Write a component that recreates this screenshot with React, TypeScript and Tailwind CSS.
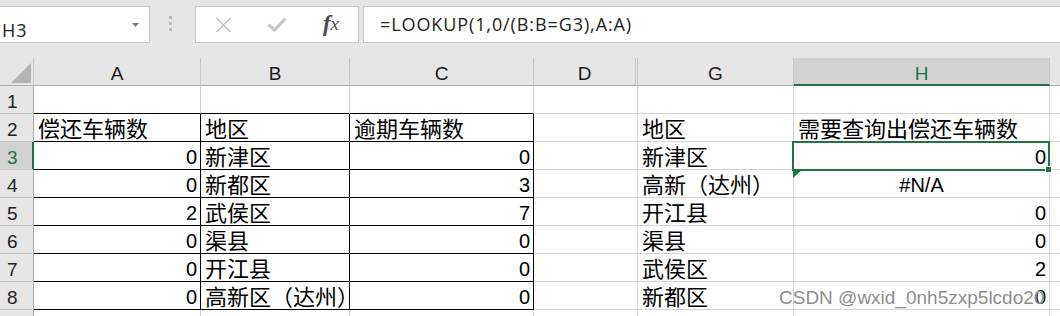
import React from "react";

type Value = string | number | null;

interface RowData {
  n: number;
  a: Value;
  b: Value;
  c: Value;
  d: Value;
  g: Value;
  h: Value;
}

const rows: RowData[] = [
  { n: 1, a: null, b: null, c: null, d: null, g: null, h: null },
  { n: 2, a: "偿还车辆数", b: "地区", c: "逾期车辆数", d: null, g: "地区", h: "需要查询出偿还车辆数" },
  { n: 3, a: 0, b: "新津区", c: 0, d: null, g: "新津区", h: 0 },
  { n: 4, a: 0, b: "新都区", c: 3, d: null, g: "高新（达州）", h: "#N/A" },
  { n: 5, a: 2, b: "武侯区", c: 7, d: null, g: "开江县", h: 0 },
  { n: 6, a: 0, b: "渠县", c: 0, d: null, g: "渠县", h: 0 },
  { n: 7, a: 0, b: "开江县", c: 0, d: null, g: "武侯区", h: 2 },
  { n: 8, a: 0, b: "高新区（达州）", c: 0, d: null, g: "新都区", h: 0 },
  { n: 9, a: null, b: null, c: null, d: null, g: null, h: null },
];

function CellValue({ value }: { value: Value }) {
  if (value === null) return null;
  if (typeof value === "number") {
    return (
      <div className="flex justify-end pr-[3px] pt-[4px] font-['Liberation_Sans',sans-serif] text-[20px] leading-[23px] text-black">
        {value}
      </div>
    );
  }
  if (value.startsWith("#")) {
    return (
      <div className="flex justify-center pt-[4px] font-['Liberation_Sans',sans-serif] text-[20px] leading-[23px] text-black">
        {value}
      </div>
    );
  }
  return (
    <div className="whitespace-nowrap pl-[4px] font-['Noto_Sans_CJK_SC',sans-serif] text-[22px] leading-[26px] text-black">
      {value}
    </div>
  );
}

function Cell({
  width,
  value,
  borders,
  children,
}: {
  width: string;
  value: Value;
  borders: string;
  children?: React.ReactNode;
}) {
  return (
    <div className={`relative h-[28px] shrink-0 border-r border-b ${width} ${borders}`}>
      <div className="h-full overflow-hidden">
        <CellValue value={value} />
      </div>
      {children}
    </div>
  );
}

function RowHeader({ n }: { n: number }) {
  if (n === 3) {
    return (
      <div className="h-[28px] w-[34px] shrink-0 border-r-2 border-b border-r-[#217346] border-b-[#c6c6c6] bg-[#d2d2d2] pl-[7px] pt-[5px] font-['Liberation_Sans',sans-serif] text-[19px] leading-[22px] text-[#217346]">
        {n}
      </div>
    );
  }
  return (
    <div className="h-[28px] w-[34px] shrink-0 border-r border-b border-r-[#ababab] border-b-[#c6c6c6] bg-[#e6e6e6] pl-[7px] pt-[5px] font-['Liberation_Sans',sans-serif] text-[19px] leading-[22px] text-[#222]">
      {n}
    </div>
  );
}

function SheetRow({ row }: { row: RowData }) {
  const inTable = row.n >= 2 && row.n <= 8;
  const tableBorders = inTable
    ? "border-r-black border-b-black"
    : row.n === 1
      ? "border-r-[#d4d4d4] border-b-black"
      : "border-r-[#d4d4d4] border-b-[#d4d4d4]";
  const grid = "border-r-[#d4d4d4] border-b-[#d4d4d4]";

  return (
    <div className="flex">
      <RowHeader n={row.n} />
      <Cell width="w-[167px]" value={row.a} borders={tableBorders} />
      <Cell width="w-[149px]" value={row.b} borders={tableBorders} />
      <Cell width="w-[184px]" value={row.c} borders={tableBorders} />
      <Cell width="w-[104px]" value={row.d} borders={grid} />
      <Cell width="w-[156px]" value={row.g} borders={grid} />
      <Cell width="w-[256px]" value={row.h} borders={grid}>
        {row.n === 3 && (
          <div className="absolute left-[-2px] right-[-1px] top-[-1px] bottom-[-2px] z-10 border-2 border-[#217346]">
            <div className="absolute left-[251px] top-[23px] h-[7px] w-[7px] border border-white bg-[#217346]" />
          </div>
        )}
        {row.n === 4 && (
          <svg className="absolute left-[-1px] top-[0px]" width="9" height="8" viewBox="0 0 9 8">
            <polygon points="0,0 9,0 0,8" fill="#1d7d35" />
          </svg>
        )}
      </Cell>
      <div className="h-[28px] flex-1 border-b border-b-[#d4d4d4]" />
    </div>
  );
}

function ColumnHeader({ label, width, active }: { label: string; width: string; active?: boolean }) {
  if (active) {
    return (
      <div
        className={`h-[28px] shrink-0 border-r border-b-2 border-r-[#c6c6c6] border-b-[#217346] bg-[#d2d2d2] pt-[5px] text-center font-['Liberation_Sans',sans-serif] text-[19px] leading-[22px] text-[#217346] ${width}`}
      >
        {label}
      </div>
    );
  }
  return (
    <div
      className={`h-[28px] shrink-0 border-r border-b border-r-[#c6c6c6] border-b-[#ababab] bg-[#e6e6e6] pt-[5px] text-center font-['Liberation_Sans',sans-serif] text-[19px] leading-[22px] text-[#1a1a1a] ${width}`}
    >
      {label}
    </div>
  );
}

function FormulaBar() {
  return (
    <div className="flex h-[58px] items-start bg-[#e6e6e6] pt-[6px]">
      {/* name box */}
      <div className="flex h-[37px] w-[150px] shrink-0 items-start justify-between border border-l-0 border-[#c6c6c6] bg-white pr-[10px]">
        <span className="pl-[2px] pt-[12px] font-['Open_Sans',sans-serif] text-[18px] leading-[23px] tracking-[1px] text-[#222]">
          H3
        </span>
        <svg className="mt-[16px]" width="7" height="4" viewBox="0 0 7 4">
          <polygon points="0,0 7,0 3.5,4" fill="#7a7a7a" />
        </svg>
      </div>

      {/* grip dots */}
      <div className="ml-[19px] mt-[10px] flex w-[26px] shrink-0 flex-col gap-[3px]">
        <span className="h-[3px] w-[3px] bg-[#b9b9b9]" />
        <span className="h-[3px] w-[3px] bg-[#b9b9b9]" />
        <span className="h-[3px] w-[3px] bg-[#b9b9b9]" />
      </div>

      {/* cancel / enter / fx */}
      <div className="flex h-[37px] w-[164px] shrink-0 border border-[#c6c6c6] bg-white">
        <div className="flex w-[54px] items-center justify-center">
          <svg width="17" height="16" viewBox="0 0 17 16">
            <path d="M1.5 1 L15.5 15 M15.5 1 L1.5 15" stroke="#c3c3c3" strokeWidth="1.6" fill="none" />
          </svg>
        </div>
        <div className="flex w-[54px] items-center justify-center">
          <svg width="20" height="15" viewBox="0 0 20 15">
            <path d="M1.5 7.5 L7.5 13 L18.5 1.5" stroke="#c8c8c8" strokeWidth="3.2" fill="none" />
          </svg>
        </div>
        <div className="flex w-[54px] items-center justify-center pb-[3px] font-['Liberation_Serif',serif] text-[23px] italic leading-none text-[#4a4a4a]">
          <span className="font-bold">f</span>
          <span className="text-[19px]">x</span>
        </div>
      </div>

      {/* formula input */}
      <div className="ml-[4px] flex h-[37px] flex-1 items-center border border-r-0 border-[#c6c6c6] bg-white pl-[16px]">
        <span className="font-['Open_Sans',sans-serif] text-[18px] tracking-[0.9px] text-[#222]">
          =LOOKUP(1,0/(B:B=G3),A:A)
        </span>
      </div>
    </div>
  );
}

export default function App() {
  return (
    <div className="relative h-[316px] w-[1060px] overflow-hidden bg-white">
      <FormulaBar />

      {/* column headers */}
      <div className="flex">
        <div className="flex h-[28px] w-[34px] shrink-0 items-end justify-end border-r border-b border-r-[#c6c6c6] border-b-[#ababab] bg-[#e6e6e6] pb-[2px] pr-[2px]">
          <svg width="20" height="20" viewBox="0 0 20 20">
            <polygon points="20,0 20,20 0,20" fill="#b4b4b4" />
          </svg>
        </div>
        <ColumnHeader label="A" width="w-[167px]" />
        <ColumnHeader label="B" width="w-[149px]" />
        <ColumnHeader label="C" width="w-[184px]" />
        <div className="flex h-[28px] w-[104px] shrink-0 border-r border-b border-r-[#c6c6c6] border-b-[#ababab] bg-[#e6e6e6]">
          <div className="w-[102px] border-r border-r-[#c6c6c6] pt-[5px] text-center font-['Liberation_Sans',sans-serif] text-[19px] leading-[22px] text-[#1a1a1a]">
            D
          </div>
        </div>
        <ColumnHeader label="G" width="w-[156px]" />
        <ColumnHeader label="H" width="w-[256px]" active />
        <div className="h-[28px] flex-1 border-b border-b-[#ababab] bg-[#e6e6e6]" />
      </div>

      {rows.map((row) => (
        <SheetRow key={row.n} row={row} />
      ))}

      {/* watermark */}
      <div className="pointer-events-none absolute left-[779px] top-[288px] z-20 whitespace-nowrap font-['Liberation_Sans',sans-serif] text-[19px] leading-none text-[#8e8e8e] [text-shadow:0_0_1px_#ffffff]">
        CSDN @wxid_0nh5zxp5lcdo20
      </div>
    </div>
  );
}
